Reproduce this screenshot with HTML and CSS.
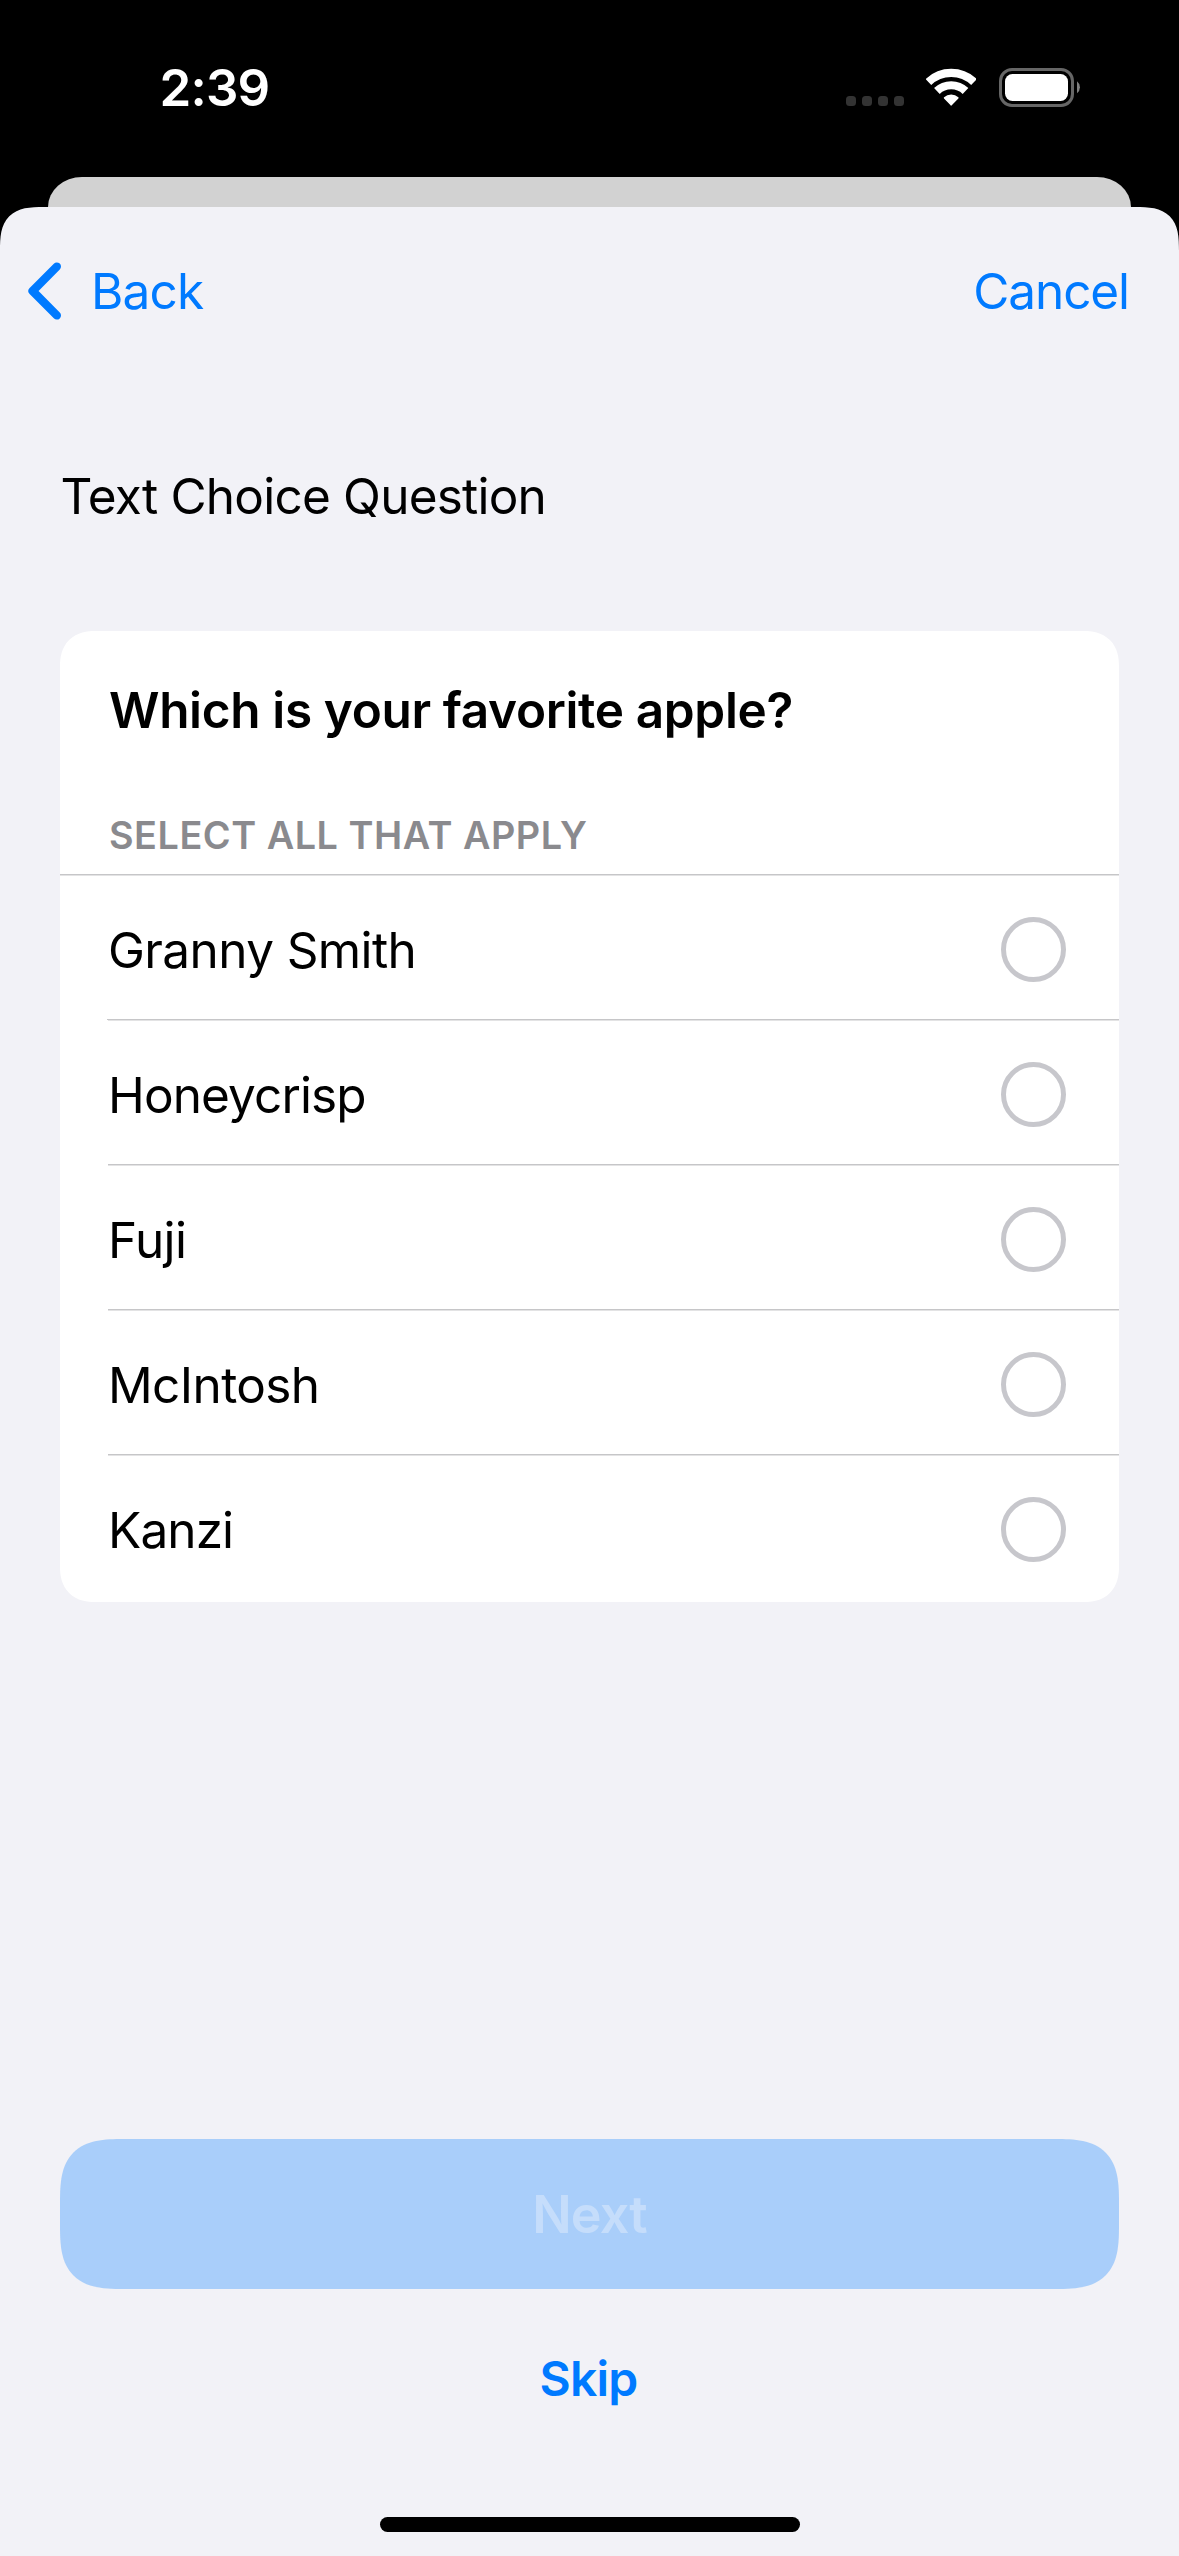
FILE: index.html
```html
<!DOCTYPE html>
<html lang="en">
<head>
<meta charset="utf-8">
<title>Text Choice Question</title>
<link rel="stylesheet" href="styles.css">
</head>
<body>
<div class="screen">
  <header class="status">
    <span class="status-time">2:39</span>
    <div class="status-icons">
      <div class="dots"><i></i><i></i><i></i><i></i></div>
      <svg class="wifi" width="50" height="38" viewBox="0 0 50 38" fill="none" stroke="#fff" stroke-width="8.2">
        <path d="M2.4 14.1A33 33 0 0 1 48 14.1"/>
        <path d="M10.9 23A20.7 20.7 0 0 1 39.5 23"/>
        <path d="M25.2 36.8L18.6 29.9A9.6 9.6 0 0 1 31.8 29.9Z" fill="#fff" stroke-width="1.6" stroke-linejoin="round"/>
      </svg>
      <svg class="battery" width="83" height="39" viewBox="0 0 83 39">
        <rect x="1.5" y="1.5" width="72" height="36" rx="11.5" fill="none" stroke="#666" stroke-width="3"/>
        <rect x="6" y="6" width="63" height="27" rx="7.5" fill="#fff"/>
        <path d="M78 13.2A7.6 7.6 0 0 1 78 25.2Z" fill="#808080"/>
      </svg>
    </div>
  </header>

  <div class="sheet-behind"></div>

  <main class="sheet">
    <nav class="nav">
      <a class="nav-back">
        <svg width="33" height="58" viewBox="0 0 33 58" fill="none" stroke="#007aff" stroke-width="8.4" stroke-linecap="round" stroke-linejoin="round">
          <path d="M28.8 4.6L4.6 29L28.8 53.4"/>
        </svg>
        <span>Back</span>
      </a>
      <a class="nav-cancel">Cancel</a>
    </nav>

    <h1 class="title">Text Choice Question</h1>

    <section class="card">
      <div class="card-head">
        <h2 class="question">Which is your favorite apple?</h2>
        <p class="hint">SELECT ALL THAT APPLY</p>
      </div>
      <ul class="choices">
        <li class="choice"><span>Granny Smith</span><i class="radio"></i></li>
        <li class="choice"><span class="name-tight">Honeycrisp</span><i class="radio"></i></li>
        <li class="choice"><span>Fuji</span><i class="radio"></i></li>
        <li class="choice"><span>McIntosh</span><i class="radio"></i></li>
        <li class="choice"><span class="name-tight">Kanzi</span><i class="radio"></i></li>
      </ul>
    </section>

    <footer class="footer">
      <div class="next">Next</div>
      <a class="skip">Skip</a>
      <div class="home-indicator"></div>
    </footer>
  </main>
</div>
</body>
</html>
```
FILE: styles.css
```css
* {
  box-sizing: border-box;
  margin: 0;
  padding: 0;
}

body {
  background: #000;
  color: #000;
  font-family: Inter, "Liberation Sans", sans-serif;
  font-size: 49.5px;
  line-height: 60px;
}

.screen {
  display: flex;
  flex-direction: column;
  width: 1179px;
  height: 2556px;
  overflow: hidden;
}

/* Status bar */
.status {
  display: flex;
  flex: none;
  justify-content: space-between;
  align-items: flex-start;
  height: 177px;
  padding: 68px 97px 0 159.5px;
}

.status-time {
  color: #fff;
  font-size: 51px;
  font-weight: 600;
  letter-spacing: -0.8px;
  line-height: 39px;
}

.status-icons {
  display: flex;
  align-items: flex-end;
  height: 38px;
}

.dots {
  display: flex;
  gap: 6px;
}

.dots i {
  width: 10px;
  height: 10px;
  border-radius: 3.5px;
  background: #333;
}

.wifi {
  margin-left: 22px;
}

.battery {
  margin-left: 23px;
  margin-bottom: -1px;
}

/* Stacked sheets */
.sheet-behind {
  flex: none;
  height: 30px;
  margin: 0 48px;
  border-radius: 34px 34px 0 0 / 30px 30px 0 0;
  background: #d2d2d2;
}

.sheet {
  display: flex;
  flex: 1;
  flex-direction: column;
  border-radius: 44px 44px 0 0;
  corner-shape: superellipse(1.55);
  background: #f2f2f7;
}

.nav {
  display: flex;
  justify-content: space-between;
  padding: 54px 50px 0 28px;
  color: #007aff;
  letter-spacing: -1.1px;
}

.nav-back {
  display: flex;
  align-items: center;
  gap: 30px;
  letter-spacing: -0.8px;
}

.title {
  margin: 145px 60px 0 60.5px;
  font-size: 49.5px;
  font-weight: 400;
  letter-spacing: -0.79px;
}

/* Question card */
.card {
  margin: 105px 60px 0;
  border-radius: 35px;
  corner-shape: superellipse(1.2);
  background: #fff;
}

.card-head {
  padding: 49px 49px 16px;
}

.question {
  font-size: 49.5px;
  font-weight: 600;
  letter-spacing: -0.35px;
}

.hint {
  margin-top: 72px;
  color: #8a8a8e;
  font-size: 37.8px;
  font-weight: 600;
  letter-spacing: 0.52px;
  line-height: 46px;
}

.choices {
  border-top: 1px solid #c6c6c8;
  list-style: none;
}

.choice {
  display: flex;
  justify-content: space-between;
  align-items: center;
  height: 145px;
  margin-left: 48px;
  padding: 5px 53px 0 0;
  border-bottom: 1px solid #c6c6c8;
  box-shadow: inset 0 1px 0 #e3e3e4;
  letter-spacing: -0.6px;
  line-height: 61px;
}

.choice span {
  padding-top: 2px;
}

.choice:first-child {
  margin-left: 0;
  padding-left: 48px;
  border-image: linear-gradient(to right, #fff 48px, #c6c6c8 48px) 1;
}

.choice:last-child {
  height: 147px;
  padding-bottom: 3px;
  border-bottom: 0;
}

.choice .name-tight {
  letter-spacing: -0.88px;
}

.radio {
  width: 65px;
  height: 65px;
  border: 5px solid #c7c7cc;
  border-radius: 50%;
}

/* Actions */
.footer {
  display: flex;
  flex-direction: column;
  align-items: center;
  margin-top: auto;
  padding: 0 60px 24px;
}

.next {
  align-self: stretch;
  height: 150px;
  border-radius: 64px;
  corner-shape: superellipse(1.55);
  background: #a9cefa;
  color: #c5ddfb;
  font-size: 52px;
  font-weight: 600;
  letter-spacing: -0.85px;
  line-height: 151px;
  text-align: center;
}

.skip {
  margin: 60px 2px 108px 0;
  color: #007aff;
  font-size: 48px;
  font-weight: 600;
  letter-spacing: -0.8px;
}

.home-indicator {
  width: 420px;
  height: 15px;
  border-radius: 8px;
  background: #000;
}
```
